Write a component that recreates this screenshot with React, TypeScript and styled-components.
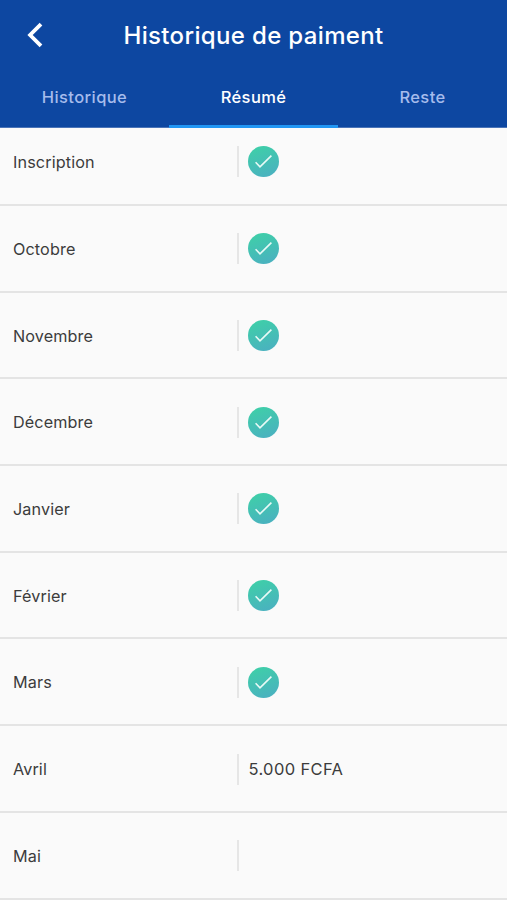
import React from "react";
import styled, { createGlobalStyle } from "styled-components";

const GlobalStyle = createGlobalStyle`
  * { box-sizing: border-box; }
  html, body { margin: 0; padding: 0; background: #fafafa; }
  body { overflow: hidden; }
`;

const Screen = styled.main`
  display: flex;
  flex-direction: column;
  width: 100%;
  height: 900px;
  overflow: hidden;
  background: #fafafa;
  color: #3c3c3c;
  font-family: Inter, "Liberation Sans", sans-serif;
`;

const Header = styled.header`
  flex: none;
  height: 128px;
  background: #0d47a1;
  border-bottom: 1px solid #4a74b8;
`;

const TitleBar = styled.div`
  display: grid;
  grid-template-columns: 72px 1fr 72px;
  align-items: center;
  height: 71px;
`;

const BackButton = styled.button`
  display: flex;
  justify-content: center;
  padding: 0 2px 1px 0;
  border: 0;
  background: none;
  color: #fff;
`;

const Title = styled.h1`
  margin: 0;
  text-align: center;
  white-space: nowrap;
  color: #fff;
  font-size: 24px;
  font-weight: 500;
  line-height: 29px;
  letter-spacing: 0.35px;
`;

const Tabs = styled.nav`
  display: grid;
  grid-template-columns: repeat(3, 1fr);
  height: 57px;
`;

const Tab = styled.button<{ $active?: boolean }>`
  padding: 0 0 3px;
  border: 0;
  border-bottom: 3px solid ${(p) => (p.$active ? "#2196f3" : "transparent")};
  background: none;
  color: ${(p) => (p.$active ? "#fff" : "#a6bcec")};
  font: 500 16.5px/20px Inter, "Liberation Sans", sans-serif;
  letter-spacing: 0.4px;
`;

const List = styled.div`
  flex: 1;
  min-height: 0;
  overflow: hidden;
`;

const Rows = styled.ul`
  list-style: none;
  margin: -8.9px 0 0;
  padding: 0;
`;

const Row = styled.li`
  display: grid;
  grid-template-columns: 224px 1fr;
  align-items: center;
  height: 86.72px;
  padding: 1px 13px 0;
  border-bottom: 2px solid #e4e4e4;
`;

const Month = styled.span`
  padding-top: 0.4px;
  font-size: 16.2px;
  line-height: 20px;
  letter-spacing: 0.12px;
`;

const Status = styled.div`
  display: flex;
  align-items: center;
  height: 31px;
  padding-left: 9px;
  border-left: 2px solid #e6e6e6;
`;

const Amount = styled.span`
  padding: 0 0 1px 0.5px;
  font-size: 16.5px;
  line-height: 20px;
  letter-spacing: 0.35px;
`;

const Badge = styled.span`
  display: flex;
  align-items: center;
  justify-content: center;
  width: 31px;
  height: 31px;
  border-radius: 50%;
  background: linear-gradient(160deg, #3fcea9 10%, #4baec2 100%);
`;

const months: { label: string; paid?: boolean; amount?: string }[] = [
  { label: "Inscription", paid: true },
  { label: "Octobre", paid: true },
  { label: "Novembre", paid: true },
  { label: "Décembre", paid: true },
  { label: "Janvier", paid: true },
  { label: "Février", paid: true },
  { label: "Mars", paid: true },
  { label: "Avril", amount: "5.000 FCFA" },
  { label: "Mai" },
];

function PaidBadge() {
  return (
    <Badge>
      <svg width="31" height="31" viewBox="0 0 31 31" fill="none" aria-hidden="true">
        <path d="M7.6 16.3L12 20.9L23.4 9.6" stroke="#e8faf6" strokeWidth="1.6" />
      </svg>
    </Badge>
  );
}

export default function App() {
  return (
    <Screen>
      <GlobalStyle />
      <Header>
        <TitleBar>
          <BackButton aria-label="Retour">
            <svg width="16" height="26" viewBox="0 0 16 26" fill="none">
              <path d="M14 2.2L3.1 13L14 23.8" stroke="currentColor" strokeWidth="3.8" />
            </svg>
          </BackButton>
          <Title>Historique de paiment</Title>
        </TitleBar>
        <Tabs>
          <Tab>Historique</Tab>
          <Tab $active>Résumé</Tab>
          <Tab>Reste</Tab>
        </Tabs>
      </Header>
      <List>
        <Rows>
          {months.map((m) => (
            <Row key={m.label}>
              <Month>{m.label}</Month>
              <Status>
                {m.paid && <PaidBadge />}
                {m.amount && <Amount>{m.amount}</Amount>}
              </Status>
            </Row>
          ))}
        </Rows>
      </List>
    </Screen>
  );
}
